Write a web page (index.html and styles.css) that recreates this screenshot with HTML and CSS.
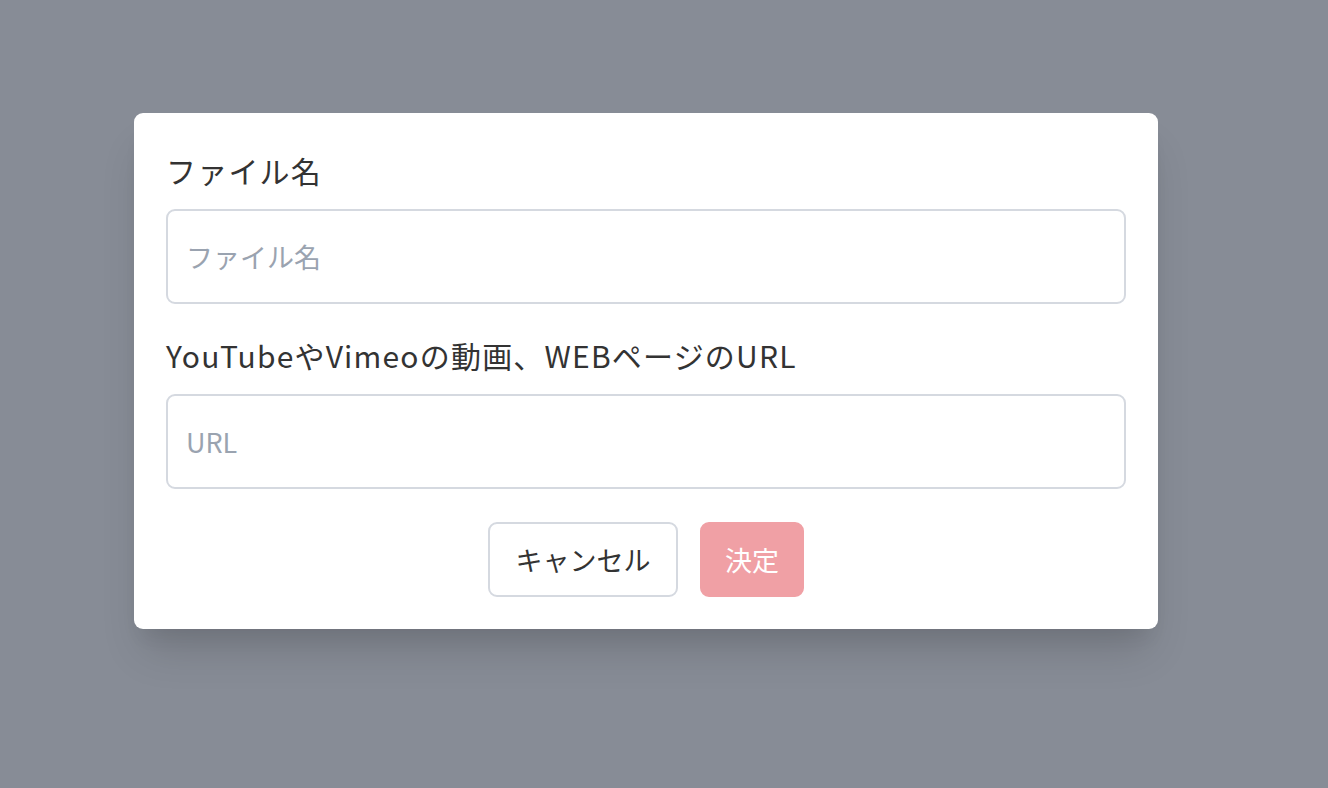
FILE: index.html
```html
<!DOCTYPE html>
<html>
  <head>
    <title>URLを追加</title>
    <link rel="stylesheet" href="styles.css">
  </head>
  <body>
    <div class="overlay">
      <div class="modal">
        <div class="field">
          <label class="label" for="name">ファイル名</label>
          <input id="name" class="input" type="text" placeholder="ファイル名">
        </div>
        <div class="field field-last">
          <label class="label" for="url">YouTubeやVimeoの動画、WEBページのURL</label>
          <input id="url" class="input" type="text" placeholder="URL">
        </div>
        <div class="actions">
          <button class="btn btn-cancel">キャンセル</button>
          <button class="btn btn-ok" disabled>決定</button>
        </div>
      </div>
    </div>
  </body>
</html>
```

FILE: styles.css
```css
html, body {
  margin: 0;
  height: 100%;
}
body {
  font-family: "Noto Sans CJK JP", "Noto Sans", sans-serif;
  background-color: #878c96;
  color: #333;
}
.overlay {
  display: flex;
  justify-content: center;
  padding-top: 113px;
}
.modal {
  width: 960px;
  padding: 32px;
  background-color: #fff;
  border-radius: 9px;
  box-shadow: 0 30px 40px -10px rgba(0, 0, 0, 0.15), 0 16px 20px -8px rgba(0, 0, 0, 0.06);
  margin-left: -36px;
}
.field {
  margin-bottom: 26px;
}
.field-last {
  margin-bottom: 33px;
}
.label {
  display: block;
  font-size: 30px;
  line-height: 50px;
  letter-spacing: 1.2px;
  margin-bottom: 14px;
}
.input {
  display: block;
  box-sizing: border-box;
  width: 100%;
  height: 95px;
  padding: 0 18px;
  border: 2px solid #d5d9e0;
  border-radius: 9px;
  font-family: inherit;
  font-size: 27px;
  color: #333;
  outline: none;
}
.input::placeholder {
  color: #9aa3b0;
}
.actions {
  display: flex;
  justify-content: center;
  gap: 22px;
}
.btn {
  box-sizing: border-box;
  height: 75px;
  padding: 0;
  border: 2px solid #d5d9e0;
  border-radius: 9px;
  background-color: #fff;
  font-family: inherit;
  font-size: 27px;
  color: #333;
  white-space: nowrap;
  cursor: pointer;
}
.btn-cancel {
  width: 190px;
}
.btn-ok {
  width: 104px;
  background-color: #f0a0a5;
  border-color: #f0a0a5;
  color: #fff;
}
```
